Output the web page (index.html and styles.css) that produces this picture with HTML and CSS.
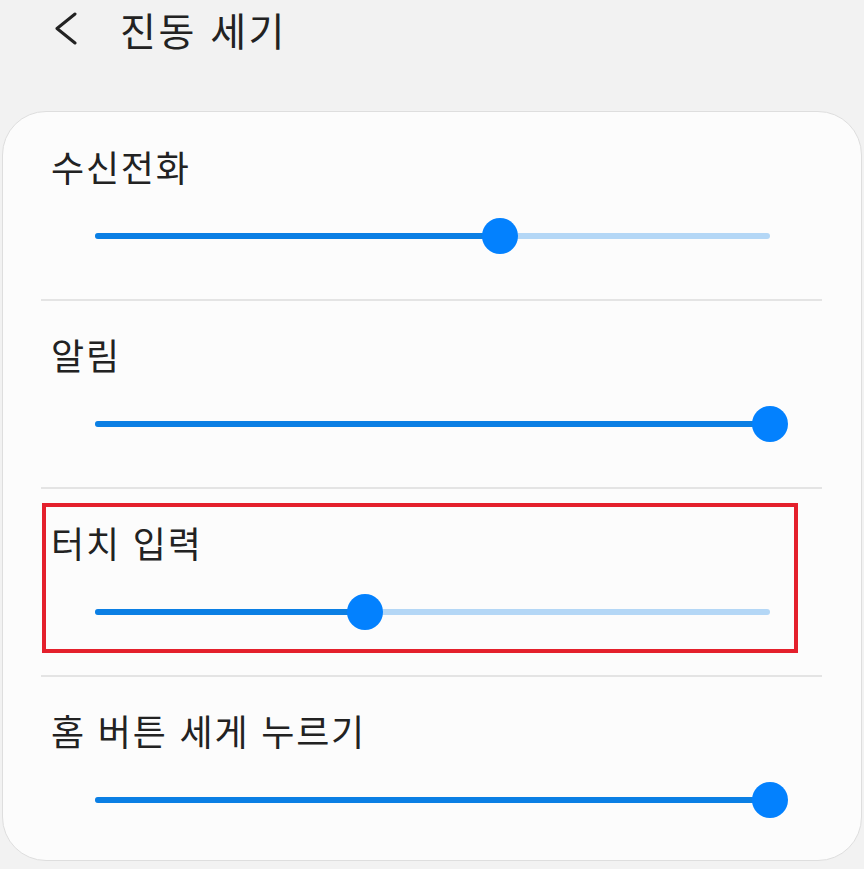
FILE: index.html
```html
<!DOCTYPE html>
<html lang="ko">
<head>
  <meta charset="UTF-8" />
  <meta name="viewport" content="width=device-width, initial-scale=1.0"/>
  <title>진동 세기</title>
  <link rel="stylesheet" href="styles.css">
</head>
<body>
  <div class="header">
    <svg class="back" width="26" height="34" viewBox="0 0 26 34">
      <polyline points="21,2 3,16.5 21,31" fill="none" stroke="#222" stroke-width="3" stroke-linecap="round" stroke-linejoin="round"/>
    </svg>
    <div class="title">진동 세기</div>
  </div>

  <div class="card">
    <div class="section">
      <div class="label">수신전화</div>
      <div class="slider" style="--v:60%">
        <div class="fill"></div>
        <div class="thumb"></div>
      </div>
    </div>

    <div class="section">
      <div class="label">알림</div>
      <div class="slider" style="--v:100%">
        <div class="fill"></div>
        <div class="thumb"></div>
      </div>
    </div>

    <div class="section highlighted">
      <div class="label">터치 입력</div>
      <div class="slider" style="--v:40%">
        <div class="fill"></div>
        <div class="thumb"></div>
      </div>
      <div class="mark"></div>
    </div>

    <div class="section">
      <div class="label">홈 버튼 세게 누르기</div>
      <div class="slider" style="--v:100%">
        <div class="fill"></div>
        <div class="thumb"></div>
      </div>
    </div>
  </div>
</body>
</html>
```

FILE: styles.css
```css
body {
  font-family: "Noto Sans CJK KR", "Noto Sans", sans-serif;
  background: #f2f2f2;
  margin: 0;
  width: 864px;
  height: 869px;
  overflow: hidden;
  color: #222;
}
.header {
  display: flex;
  align-items: center;
  height: 58px;
  padding-left: 54px;
}
.header .back {
  display: block;
}
.title {
  font-size: 39px;
  line-height: 58px;
  letter-spacing: 2.5px;
  margin-left: 40px;
  color: #222;
}
.card {
  margin: 53px 2px 0 2px;
  background: #fcfcfc;
  border: 1px solid #dedede;
  border-radius: 44px;
  padding: 1px 39px 0 38px;
}
.section {
  position: relative;
  padding: 30px 0 45px;
  border-bottom: 2px solid #e4e4e4;
}
.section:last-child {
  border-bottom: none;
  padding-bottom: 42px;
}
.label {
  font-size: 36px;
  line-height: 46px;
  letter-spacing: 1.8px;
  padding-left: 10px;
  margin-bottom: 29px;
}
.slider {
  position: relative;
  height: 36px;
  margin: 0 52px 0 54px;
}
.slider::before {
  content: "";
  position: absolute;
  left: 0;
  right: 0;
  top: 15px;
  height: 6px;
  border-radius: 3px;
  background: #b4d7f6;
}
.fill {
  position: absolute;
  left: 0;
  top: 15px;
  height: 6px;
  width: var(--v);
  border-radius: 3px;
  background: #0b7fe4;
}
.thumb {
  position: absolute;
  top: 0;
  left: calc(var(--v) - 18px);
  width: 36px;
  height: 36px;
  border-radius: 50%;
  background: #0381fe;
}
.mark {
  position: absolute;
  top: 14px;
  left: 1px;
  width: 748px;
  height: 142px;
  border: 4px solid #e4202c;
}
```
